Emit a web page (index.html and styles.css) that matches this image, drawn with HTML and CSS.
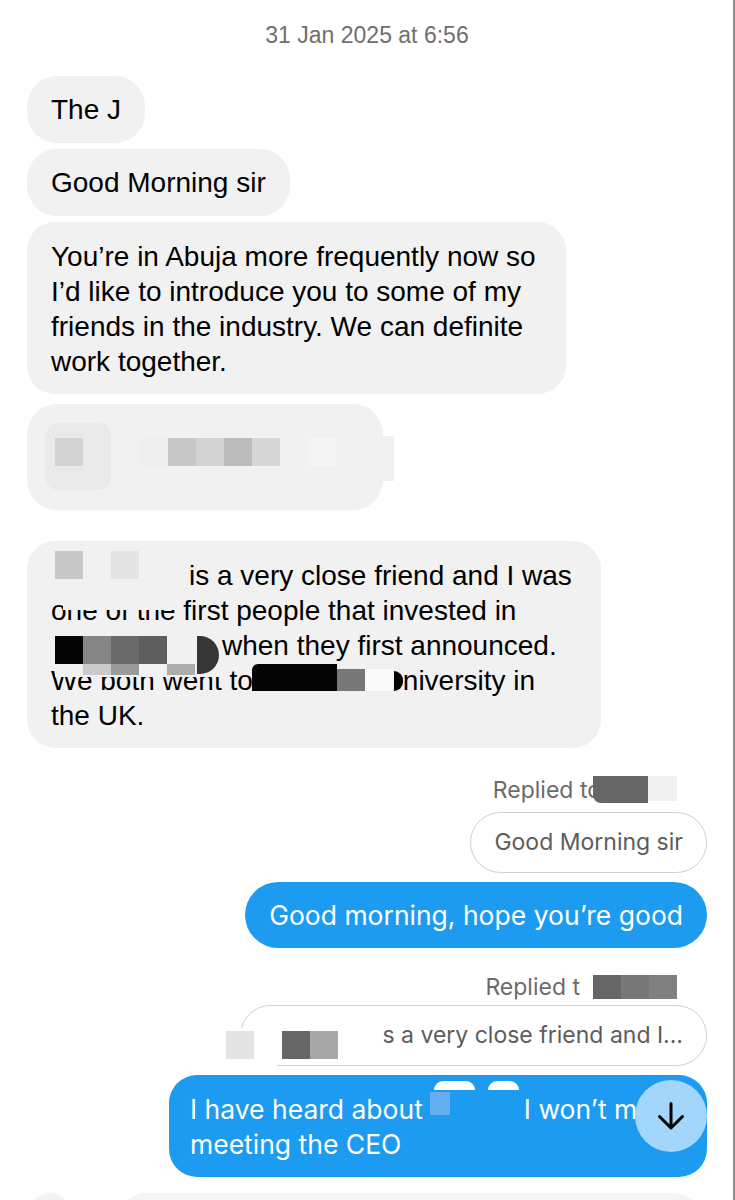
FILE: index.html
```html
<!DOCTYPE html>
<html lang="en">
<head>
    <meta charset="UTF-8">
    <meta name="viewport" content="width=device-width, initial-scale=1.0">
    <title>Messages</title>
    <link rel="stylesheet" href="styles.css">
</head>
<body>
    <div class="screen">
        <div class="date">31 Jan 2025 at 6:56</div>

        <div class="thread-in">
            <div class="bubble in">The J</div>
            <div class="bubble in">Good Morning sir</div>
            <div class="bubble in wide">You’re in Abuja more frequently now so<br>I’d like to introduce you to some of my<br>friends in the industry. We can definite<br>work together.</div>

            <div class="bubble in card">
                <div class="thumb"><span class="px k12"></span></div>
                <div class="px-row">
                    <span class="px k15"></span>
                    <span class="px k10"></span>
                    <span class="px k12"></span>
                    <span class="px k9"></span>
                    <span class="px k13"></span>
                    <span class="px"></span>
                    <span class="px k16"></span>
                </div>
                <span class="card-tab"></span>
            </div>

            <div class="bubble in wide friend">
                <span class="gap-name"></span>is a very close friend and I was<br>
                one of the first people that invested in<br>
                <span class="gap-co"></span>when they first announced.<br>
                We both went to<span class="gap-uni"></span>niversity in<br>
                the UK.
                <div class="mask m-name"><span class="px k10"></span><span class="px"></span><span class="px k14"></span></div>
                <div class="mask m-line2"></div>
                <div class="mask m-co"><span class="px k0"></span><span class="px k5"></span><span class="px k3"></span><span class="px k2"></span></div>
                <div class="mask m-co-low"><span class="px"></span><span class="px k11"></span><span class="px k6"></span><span class="px"></span><span class="px k8"></span></div>
                <div class="mask m-co-end"></div>
                <div class="mask m-uni"><span class="blk-wide k0"></span><span class="px k4"></span><span class="px k17"></span><span class="u-end"></span></div>
            </div>
        </div>

        <div class="thread-out">
            <div class="replied">Replied to<span class="tag tag-one"><span class="tag-dark"></span><span class="tag-light"></span></span></div>
            <div class="bubble quote">Good Morning sir</div>
            <div class="bubble out">Good morning, hope you’re good</div>

            <div class="replied replied-two">Replied t<span class="tag tag-two"><span class="px k3b"></span><span class="px k4"></span><span class="px k4b"></span></span></div>
            <div class="bubble quote quote-two">
                <span class="gap-quote"></span>s a very close friend and I...
                <div class="mask q-cover"></div>
                <div class="mask q-name"><span class="px k14"></span><span class="px"></span><span class="px k3b"></span><span class="px k7"></span></div>
            </div>
            <div class="bubble out out-two">
                I have heard about<span class="gap-ceo"></span>I won’t mind<br>meeting the CEO
                <span class="mask b-square"></span>
                <span class="mask b-bump"></span>
                <span class="mask b-bump b-bump-two"></span>
                <div class="scroll-down">
                    <svg width="30" height="30" viewBox="0 0 30 30" fill="none" stroke="#000" stroke-width="3" stroke-linecap="round" stroke-linejoin="round">
                        <path d="M15 2.5V27M3.5 15.5L15 27l11.5-11.5"/>
                    </svg>
                </div>
            </div>
        </div>

        <div class="next">
            <div class="avatar"></div>
            <div class="next-bubble"></div>
        </div>
    </div>
</body>
</html>
```

FILE: styles.css
```css
body {
    margin: 0;
    padding: 0;
    background: #fff;
    font-family: "Liberation Sans", Arial, sans-serif;
}

.screen {
    width: 735px;
    height: 1200px;
    overflow: hidden;
    box-sizing: border-box;
    border-right: 2px solid #8f8f8f;
    padding: 21px 26px 0 27px;
    display: flex;
    flex-direction: column;
}

.date {
    text-align: center;
    font-size: 23px;
    line-height: 28px;
    color: #6f6f6f;
    margin-bottom: 27px;
}

/* received messages */

.thread-in {
    display: flex;
    flex-direction: column;
    align-items: flex-start;
    gap: 6px;
}

.bubble {
    position: relative;
    box-sizing: border-box;
    border-radius: 30px;
}

.in {
    background: #f1f1f1;
    color: #000;
    font-size: 28px;
    line-height: 35px;
    padding: 16px 24px;
}

.wide {
    padding: 17px 30px 15px 24px;
    border-radius: 28px;
}

.px {
    display: block;
    width: 28px;
    height: 28px;
    flex: none;
}

.k0 { background: #050505; }
.k2 { background: #5e5e5e; }
.k3 { background: #6a6a6a; }
.k3b { background: #666; }
.k4 { background: #777; }
.k4b { background: #808080; }
.k5 { background: #858585; }
.k6 { background: #9a9a9a; }
.k7 { background: #a8a8a8; }
.k8 { background: #adadad; }
.k9 { background: #bcbcbc; }
.k10 { background: #c8c8c8; }
.k11 { background: #cacaca; }
.k12 { background: #d3d3d3; }
.k13 { background: #d7d7d7; }
.k14 { background: #e4e4e4; }
.k15 { background: #eeeeee; }
.k16 { background: #f5f5f5; }
.k17 { background: #fafafa; }

.card {
    width: 356px;
    margin-top: 4px;
    padding: 19px 20px 20px 19px;
    display: flex;
    align-items: flex-start;
}

.thumb {
    width: 65px;
    height: 67px;
    box-sizing: border-box;
    padding: 15px 0 0 9px;
    border-radius: 12px;
    background: #eaeaea;
}

.px-row {
    display: flex;
    margin: 15px 0 0 29px;
}

.card-tab {
    position: absolute;
    right: -11px;
    top: 32px;
    width: 12px;
    height: 45px;
    background: #f0f0f0;
}

.friend {
    margin-top: 25px;
    padding-right: 29px;
}

.gap-name, .gap-co, .gap-uni, .gap-quote, .gap-ceo {
    display: inline-block;
}

.gap-name { width: 138px; }
.gap-co { width: 171px; }
.gap-uni { width: 150px; }

/* redaction marks laid over the text */

.mask {
    position: absolute;
    display: flex;
}

.m-name { left: 28px; top: 10px; }

.m-line2 {
    left: 36px;
    top: 52px;
    width: 113px;
    height: 17px;
    background: #f1f1f1;
}

.m-co { left: 28px; top: 95px; }

.m-co-low {
    left: 28px;
    top: 123px;
    width: 170px;
    height: 13px;
    background: #f2f2f2;
}

.m-co-low .px { height: 11px; }

.m-co-end {
    left: 170px;
    top: 95px;
    width: 22px;
    height: 38px;
    background: #363636;
    border-radius: 0 20px 20px 0;
}

.m-uni { left: 225px; top: 123px; align-items: flex-end; }
.m-uni .px { height: 22px; }

.blk-wide {
    display: block;
    width: 85px;
    height: 27px;
    border-radius: 6px 0 0 0;
}

.u-end {
    display: block;
    width: 9px;
    height: 20px;
    margin-left: 1px;
    background: #050505;
    border-radius: 0 9px 9px 0;
}

/* sent messages */

.thread-out {
    display: flex;
    flex-direction: column;
    align-items: flex-end;
}

.replied {
    display: flex;
    align-items: center;
    margin: 28px 30px 0 0;
    height: 27px;
    font-family: Inter, "Liberation Sans", sans-serif;
    font-size: 23px;
    color: #6b6b6b;
}

.tag {
    display: flex;
    height: 27px;
}

.tag-one { margin-left: -8px; }

.tag-dark {
    width: 55px;
    height: 27px;
    background: #666;
    border-radius: 0 0 0 8px;
}

.tag-light {
    width: 29px;
    height: 25px;
    background: #f1f1f1;
}

.replied-two { margin-top: 27px; height: 24px; }
.tag-two { margin-left: 13px; height: 24px; }
.tag-two .px { height: 24px; }

.quote {
    margin-top: 9px;
    border: 1px solid #cfcfcf;
    color: #5c5c5c;
    font-family: Inter, "Liberation Sans", sans-serif;
    font-size: 23px;
    line-height: 29px;
    padding: 15px 23px;
    border-radius: 31px;
}

.quote-two {
    width: 467px;
    margin-top: 6px;
    text-align: right;
}

.q-cover {
    left: -3px;
    top: 22px;
    width: 40px;
    height: 42px;
    background: #fff;
}

.q-name { left: -15px; top: 25px; }

.out {
    margin-top: 9px;
    background: #1d9bf0;
    color: #fff;
    font-family: Inter, "Liberation Sans", sans-serif;
    font-size: 26.5px;
    line-height: 32px;
    padding: 17px 24px;
    border-radius: 33px;
}

.out-two {
    width: 538px;
    line-height: 35px;
    padding: 17px 24px 15px 21px;
    border-radius: 28px;
}

.gap-ceo { width: 101px; }

.b-square {
    left: 261px;
    top: 17px;
    width: 20px;
    height: 23px;
    background: #62aef0;
}

.b-bump {
    left: 265px;
    top: 6px;
    width: 41px;
    height: 9px;
    background: #fff;
    border-radius: 20px 20px 0 0;
}

.b-bump-two { left: 319px; width: 31px; }

.scroll-down {
    position: absolute;
    right: 0;
    top: 5px;
    width: 72px;
    height: 72px;
    border-radius: 50%;
    background: #a2d6fa;
    display: flex;
    align-items: center;
    justify-content: center;
}

.next {
    display: flex;
    margin: 16px 4px 0 3px;
}

.avatar {
    width: 40px;
    height: 40px;
    border-radius: 50%;
    background: #f3f3f3;
    flex: none;
}

.next-bubble {
    flex: 1;
    height: 60px;
    margin-left: 47px;
    border-radius: 30px;
    background: #f4f4f4;
}
```
